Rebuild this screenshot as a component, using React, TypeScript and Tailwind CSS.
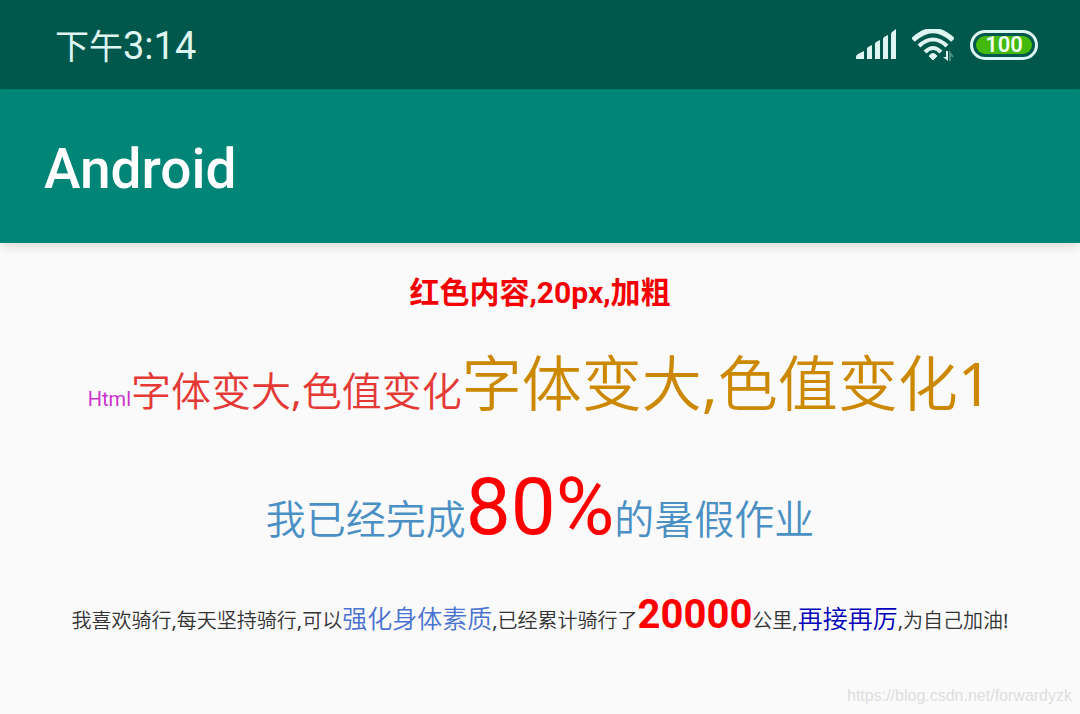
function SignalIcon() {
  return (
    <svg className="h-8 w-10" viewBox="0 0 40 32" fill="#dff5f1" aria-hidden="true">
      <path d="M0 30 V28 Q0 26 2 25 L8 22 V30 Z" />
      <path d="M11 30 V20 Q11 19 12 18 L16 16 V30 Z" />
      <path d="M19 30 V15 Q19 14 20 13 L24 11 V30 Z" />
      <path d="M27 30 V10 Q27 9 28 8 L32 6 V30 Z" />
      <path d="M35 30 V5 Q35 4 36 3 L40 0 V30 Z" />
    </svg>
  );
}

function WifiIcon() {
  return (
    <svg className="h-8 w-[42px]" viewBox="0 0 42 32" fill="none" stroke="#dff5f1" strokeWidth="4" aria-hidden="true">
      <path d="M1 11 Q21 -8 41 11" strokeWidth="5" />
      <path d="M7 17 Q21 4 35 17" />
      <path d="M13 23 Q21 15 29 23" />
      <path d="M17 27 Q21 22 25 27 L21 31 Z" fill="#dff5f1" stroke="#dff5f1" strokeWidth="1" />
      <path d="M34 22 H36 V32 L31 28 H34 Z" fill="#dff5f1" stroke="none" />
      <path d="M38 32 V24 L41 28" stroke="#4d8a81" strokeWidth="2" />
    </svg>
  );
}

function StatusBar() {
  return (
    <header className="flex h-[89px] items-center justify-between bg-[#00574b] pr-[42px] pl-[55px] text-[#dff5f1]">
      <time className="pt-1 text-[34px] leading-10">
        下午<span className="text-[38px]">3:14</span>
      </time>
      <div className="flex items-center gap-4">
        <SignalIcon />
        <WifiIcon />
        <span className="flex h-[30px] w-[68px] rounded-full border-3 border-[#dff5f1] p-[3px]">
          <span className="flex flex-1 items-center justify-center rounded-full bg-[#42b90b] pt-px text-[22px] leading-none font-semibold text-[#eefbf0]">
            100
          </span>
        </span>
      </div>
    </header>
  );
}

export default function App() {
  return (
    <div className="flex min-h-screen flex-col bg-[#fafafa] font-[Roboto,'Noto_Sans_CJK_SC',sans-serif]">
      <StatusBar />
      <div className="flex h-[154px] items-center bg-[#008577] px-11 pt-[6px] shadow-[0_6px_10px_-2px_rgba(0,0,0,0.12)]">
        <h1 className="text-[55px] font-medium text-white">Android</h1>
      </div>
      <main className="flex flex-col items-center font-['Noto_Sans','Noto_Sans_CJK_SC_DemiLight','Noto_Sans_CJK_SC',sans-serif] whitespace-nowrap">
        <p className="mt-[30px] font-[Roboto,'Noto_Sans_CJK_SC',sans-serif] text-[30px] leading-10 font-bold text-[#f40000]">
          红色内容,20px,加粗
        </p>
        <p className="mt-[30px] text-[60px] leading-[80px] text-[#cc8800]">
          <span className="font-[Roboto] text-[20px] text-[#cc33cc]">Html</span>
          <span className="text-[40px] text-[#e53935]">字体变大,色值变化</span>
          字体变大,色值变化1
        </p>
        <p className="mt-[18px] text-[40px] leading-[100px] text-[#4a90c4]">
          我已经完成<span className="font-[Roboto] text-[80px] text-[#ff0000]">80%</span>的暑假作业
        </p>
        <p className="mt-4 text-[20px] leading-[60px] text-[#333333]">
          我喜欢骑行,每天坚持骑行,可以<span className="text-[25px] text-[#4a72d0]">强化身体素质</span>,已经累计骑行了
          <b className="font-[Roboto] text-[40px] font-bold text-[#ff0000]">20000</b>公里,
          <span className="text-[25px] text-[#0000b8]">再接再厉</span>,为自己加油!
        </p>
      </main>
      <footer className="mt-auto px-2 pb-[6px] text-right font-['Liberation_Sans',sans-serif] text-[16px] text-[#dedede]">
        https://blog.csdn.net/forwardyzk
      </footer>
    </div>
  );
}
